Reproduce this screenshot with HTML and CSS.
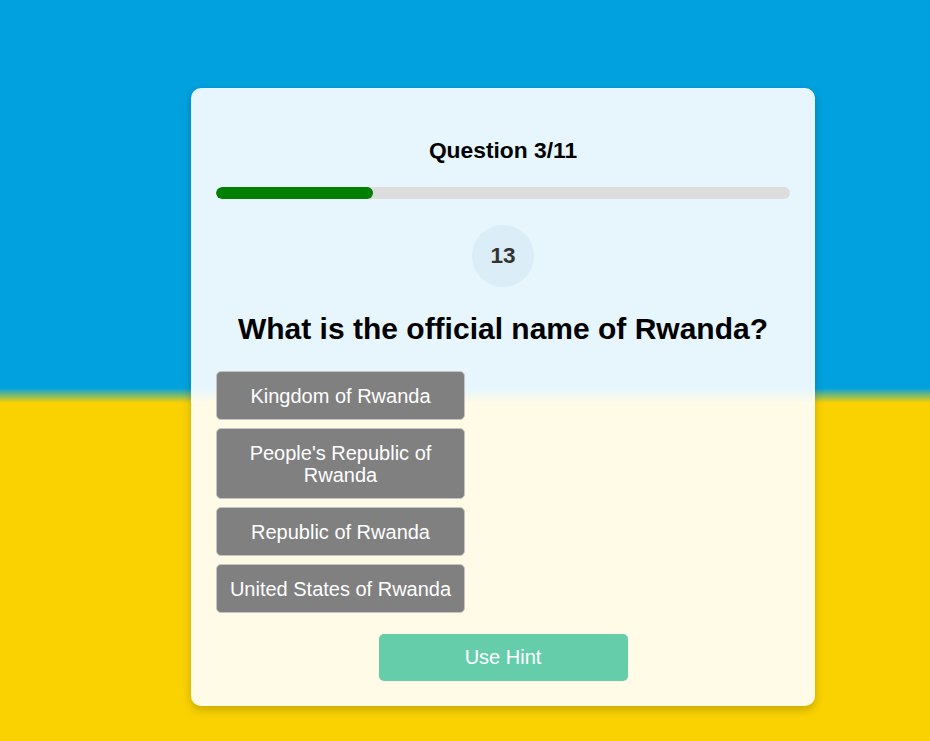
FILE: index.html
```
<!DOCTYPE html>
<html>
<head>
<meta charset="utf-8">
<link rel="stylesheet" href="styles.css">
</head>
<body>
<main class="stage">
  <section class="card">
    <h3 class="title">Question 3/11</h3>
    <div class="progress"><div class="progress-fill" style="width:27.27%"></div></div>
    <div class="timer">13</div>
    <h2 class="question">What is the official name of Rwanda?</h2>
    <div class="options">
      <button class="option">Kingdom of Rwanda</button>
      <button class="option">People's Republic of Rwanda</button>
      <button class="option">Republic of Rwanda</button>
      <button class="option">United States of Rwanda</button>
    </div>
    <div class="hint-row"><button class="hint">Use Hint</button></div>
  </section>
</main>
</body>
</html>
```
FILE: styles.css
```
* { box-sizing: border-box; }
html, body { margin: 0; padding: 0; }
body {
  font-family: "Liberation Sans", Arial, sans-serif;
  background: linear-gradient(to bottom, #00a1de 0, #00a1de 388px, #fad201 403px, #fad201 100%);
  min-height: 741px;
}
.stage {
  display: flex;
  justify-content: flex-start;
  padding-top: 88px;
  padding-left: 191px;
  width: 930px;
}
.card {
  width: 624px;
  background: rgba(255, 255, 255, 0.9);
  border-radius: 10px;
  box-shadow: 0 4px 10px rgba(0, 0, 0, 0.2);
  padding: 25px 25px 25px;
  display: flex;
  flex-direction: column;
}
.title {
  margin: 24px 0 0;
  text-align: center;
  font-size: 22.8px;
  font-weight: bold;
  line-height: 26px;
  color: #000;
}
.progress {
  margin-top: 24px;
  height: 12px;
  background: #dddddd;
  border-radius: 6px;
  overflow: hidden;
}
.progress-fill {
  height: 100%;
  background: #008000;
  border-radius: 6px;
}
.timer {
  margin: 26px auto 0;
  width: 62px;
  height: 62px;
  border-radius: 50%;
  background: #dbedf6;
  display: flex;
  align-items: center;
  justify-content: center;
  font-size: 22.5px;
  font-weight: bold;
  color: #333;
}
.question {
  margin: 25px 0 0;
  text-align: center;
  font-size: 30px;
  line-height: 34px;
  font-weight: bold;
  color: #000;
}
.options {
  margin-top: 25px;
  display: flex;
  flex-direction: column;
  gap: 8px;
  align-items: flex-start;
}
.option {
  width: 249px;
  padding: 12.5px 10px;
  background: #808080;
  color: #fff;
  border: 1px solid #c4c4c4;
  border-radius: 5px;
  font-family: "Liberation Sans", Arial, sans-serif;
  font-size: 20px;
  line-height: 22px;
  text-align: center;
}
.hint-row {
  margin-top: 21px;
  display: flex;
  justify-content: center;
}
.hint {
  width: 249px;
  padding: 12px 10px;
  background: #66cdaa;
  color: #fff;
  border: none;
  border-radius: 5px;
  font-family: "Liberation Sans", Arial, sans-serif;
  font-size: 20px;
  line-height: 23px;
}
```
